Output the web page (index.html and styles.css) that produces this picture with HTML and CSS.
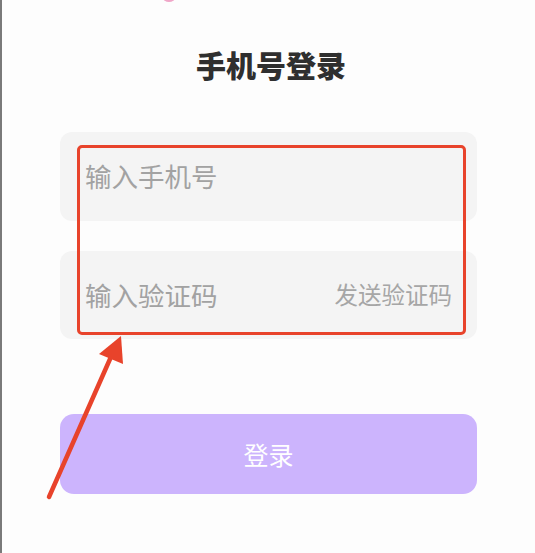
FILE: index.html
```html
<!DOCTYPE html>
<html lang="zh">
<head>
<meta charset="utf-8">
<title>手机号登录</title>
<link rel="stylesheet" href="styles.css">
</head>
<body>
<div class="edge"></div>
<div class="dot"></div>
<main class="page">
  <h1 class="title">手机号登录</h1>
  <div class="field">
    <span class="placeholder">输入手机号</span>
  </div>
  <div class="field field-code">
    <span class="placeholder">输入验证码</span>
    <span class="send">发送验证码</span>
  </div>
  <button class="login">登录</button>
</main>
<div class="highlight"></div>
<svg class="arrow" width="535" height="553" viewBox="0 0 535 553">
  <line x1="49" y1="497" x2="114" y2="350" stroke="#e8432b" stroke-width="4.5" stroke-linecap="round"/>
  <polygon points="121,336 99,354 123,364" fill="#e8432b"/>
</svg>
</body>
</html>
```
FILE: styles.css
```css
html, body {
  margin: 0;
  padding: 0;
  background: #fdfdfd;
  font-family: "Noto Sans CJK SC", "Noto Sans", sans-serif;
}
body {
  position: relative;
  width: 535px;
  height: 553px;
  overflow: hidden;
}
.edge {
  position: absolute;
  left: 0;
  top: 0;
  width: 2px;
  height: 553px;
  background: #7a7a7a;
}
.dot {
  position: absolute;
  left: 163px;
  top: -6px;
  width: 12px;
  height: 8px;
  border-radius: 50%;
  background: #f0a6c8;
}
.page {
  padding: 44px 0 0 60px;
  width: 417px;
  display: flex;
  flex-direction: column;
}
.title {
  margin: 0;
  font-size: 30px;
  line-height: 40px;
  font-weight: 900;
  color: #2f2f2f;
  text-align: center;
  padding-left: 5px;
}
.field {
  margin-top: 48px;
  height: 89px;
  border-radius: 12px;
  background: #f4f4f4;
  display: flex;
  align-items: center;
  justify-content: space-between;
  padding: 0 25px;
}
.field-code {
  margin-top: 30px;
  height: 88px;
}
.placeholder {
  font-size: 26.5px;
  color: #a2a2a2;
  line-height: 1;
}
.send {
  font-size: 23.5px;
  color: #a6a6a6;
  line-height: 1;
}
.login {
  margin-top: 75px;
  height: 80px;
  border: none;
  border-radius: 14px;
  background: #ccb4fd;
  color: #ffffff;
  font-family: "Noto Sans CJK SC", "Noto Sans", sans-serif;
  font-size: 25px;
  padding: 0;
}
.highlight {
  position: absolute;
  left: 77px;
  top: 145px;
  width: 383px;
  height: 184px;
  border: 3px solid #e8432b;
  border-radius: 5px;
}
.arrow {
  position: absolute;
  left: 0;
  top: 0;
}
```
